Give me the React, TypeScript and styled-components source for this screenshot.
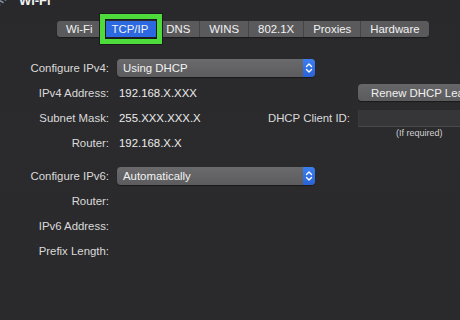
import React from 'react'
import styled, { createGlobalStyle } from 'styled-components'

const GlobalStyle = createGlobalStyle`
  html, body {
    margin: 0;
    padding: 0;
    background: #2b2b2d;
  }
  body {
    width: 460px;
    height: 320px;
    overflow: hidden;
    font-family: "Liberation Sans", Arial, sans-serif;
    -webkit-font-smoothing: antialiased;
  }
`

const Window = styled.div`
  width: 460px;
  height: 320px;
  overflow: hidden;
  background: linear-gradient(180deg, #29292b 0%, #2b2b2d 40%, #2a2a2c 100%);
  color: #e4e4e4;
  font-size: 11.4px;
`

const Header = styled.div`
  display: flex;
  align-items: center;
  gap: 8px;
  height: 14px;
  margin-top: -6px;
  margin-left: -9px;
`

const Title = styled.span`
  font-size: 13px;
  line-height: 14px;
  font-weight: bold;
  color: #f2f2f2;
  margin-left: 4px;
`

const TabRow = styled.div`
  display: flex;
  margin-top: 13px;
  padding-left: 57px;
`

const TabBar = styled.div`
  display: flex;
  height: 16px;
  background: #5a5a5c;
  border-radius: 3px;
  box-shadow: 0 1px 1px rgba(0, 0, 0, 0.35);
`

const Tab = styled.div<{ active?: boolean; last?: boolean }>`
  position: relative;
  display: flex;
  align-items: center;
  padding: 0 9px;
  line-height: 16px;
  color: #f2f2f2;
  background: ${(p) => (p.active ? '#2c69e0' : 'transparent')};
  border-right: ${(p) => (p.last || p.active ? 'none' : '1px solid #444446')};
  ${(p) =>
    p.active &&
    `
    &::after {
      content: '';
      position: absolute;
      top: -7px;
      bottom: -7px;
      left: -3px;
      right: -5px;
      border: 5px solid #4edc3c;
      box-shadow: inset 0 0 0 1px #1b1b1b, 0 0 0 1px #1b1b1b;
    }
  `}
`

const Form = styled.div`
  display: flex;
  flex-direction: column;
  padding-top: 18px;
`

const Section = styled.div<{ gapTop?: number }>`
  display: flex;
  flex-direction: column;
  margin-top: ${(p) => p.gapTop || 0}px;
`

const Row = styled.div`
  display: grid;
  grid-template-columns: 109px 233px 130px;
  column-gap: 8px;
  height: 25px;
  align-items: center;
`

const Label = styled.span`
  text-align: right;
  color: #dadada;
  white-space: nowrap;
`

const Value = styled.span`
  color: #ececec;
  padding-left: 2px;
  white-space: nowrap;
`

const Middle = styled.div`
  display: flex;
  justify-content: space-between;
  align-items: center;
`

const Popup = styled.div`
  display: flex;
  align-items: center;
  width: 198px;
  height: 18px;
  border-radius: 4px;
  background: linear-gradient(180deg, #6a6a6c 0%, #5c5c5e 100%);
  box-shadow: 0 1px 1px rgba(0, 0, 0, 0.4);
  overflow: hidden;
`

const PopupText = styled.span`
  flex: 1;
  padding-left: 6px;
  color: #f2f2f2;
`

const Stepper = styled.div`
  width: 12px;
  height: 18px;
  background: linear-gradient(180deg, #3a7ff0 0%, #2a63d6 100%);
  display: flex;
  align-items: center;
  justify-content: center;
`

const Button = styled.div`
  height: 17px;
  border-radius: 4px 0 0 4px;
  background: linear-gradient(180deg, #676769 0%, #5b5b5d 100%);
  box-shadow: 0 1px 1px rgba(0, 0, 0, 0.4);
  display: flex;
  align-items: center;
  padding-left: 13px;
  color: #f0f0f0;
  white-space: nowrap;
`

const Field = styled.div`
  height: 16px;
  background: #363638;
  border-top: 1px solid #2a2a2c;
  border-bottom: 1px solid #4a4a4c;
  border-left: 1px solid #3a3a3c;
`

const Hint = styled.span`
  align-self: start;
  margin-top: -2px;
  padding-left: 38px;
  font-size: 9px;
  line-height: 10px;
  color: #d0d0d0;
`

const WifiIcon = () => (
  <svg width="16" height="12" viewBox="0 0 16 12">
    <g fill="none" stroke="#8893a6" strokeWidth="1.6" strokeLinecap="round">
      <path d="M1.5 5 A9 9 0 0 1 14.5 5" />
      <path d="M4 7.5 A5.5 5.5 0 0 1 12 7.5" />
    </g>
    <circle cx="8" cy="10" r="1.3" fill="#8893a6" />
  </svg>
)

const Chevrons = () => (
  <svg width="8" height="12" viewBox="0 0 8 12">
    <g fill="none" stroke="#ffffff" strokeWidth="1.4" strokeLinecap="round" strokeLinejoin="round">
      <path d="M1.5 4.5 L4 2 L6.5 4.5" />
      <path d="M1.5 7.5 L4 10 L6.5 7.5" />
    </g>
  </svg>
)

const tabs = ['Wi-Fi', 'TCP/IP', 'DNS', 'WINS', '802.1X', 'Proxies', 'Hardware']

const App = () => {
  return (
    <Window>
      <GlobalStyle />
      <Header>
        <WifiIcon />
        <Title>Wi-Fi</Title>
      </Header>
      <TabRow>
        <TabBar>
          {tabs.map((t, i) => (
            <Tab key={t} active={t === 'TCP/IP'} last={i === tabs.length - 1}>
              {t}
            </Tab>
          ))}
        </TabBar>
      </TabRow>
      <Form>
        <Section>
          <Row>
            <Label>Configure IPv4:</Label>
            <Popup>
              <PopupText>Using DHCP</PopupText>
              <Stepper><Chevrons /></Stepper>
            </Popup>
            <span />
          </Row>
          <Row>
            <Label>IPv4 Address:</Label>
            <Value>192.168.X.XXX</Value>
            <Button>Renew DHCP Lease</Button>
          </Row>
          <Row>
            <Label>Subnet Mask:</Label>
            <Middle>
              <Value>255.XXX.XXX.X</Value>
              <Label>DHCP Client ID:</Label>
            </Middle>
            <Field />
          </Row>
          <Row>
            <Label>Router:</Label>
            <Value>192.168.X.X</Value>
            <Hint>(If required)</Hint>
          </Row>
        </Section>
        <Section gapTop={8}>
          <Row>
            <Label>Configure IPv6:</Label>
            <Popup>
              <PopupText>Automatically</PopupText>
              <Stepper><Chevrons /></Stepper>
            </Popup>
            <span />
          </Row>
          <Row>
            <Label>Router:</Label>
            <span />
            <span />
          </Row>
          <Row>
            <Label>IPv6 Address:</Label>
            <span />
            <span />
          </Row>
          <Row>
            <Label>Prefix Length:</Label>
            <span />
            <span />
          </Row>
        </Section>
      </Form>
    </Window>
  )
}

export default App
